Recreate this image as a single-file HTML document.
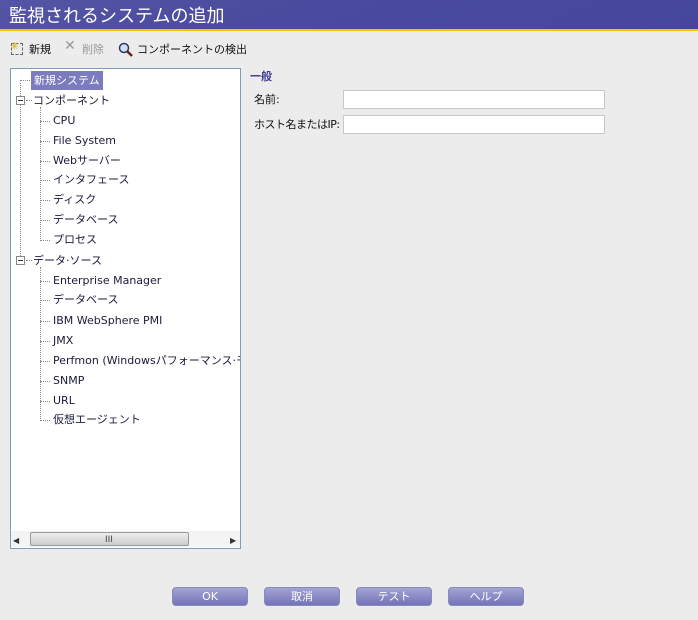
<!DOCTYPE html>
<html><head><meta charset="utf-8"><style>
*{margin:0;padding:0;box-sizing:border-box}
body{width:698px;height:620px;background:#ececec;position:relative;overflow:hidden;font-family:"DejaVu Sans","Noto Sans CJK JP",sans-serif;font-size:11px;color:#111;line-height:13px}
.t{position:absolute;white-space:nowrap}
#title{position:absolute;left:0;top:0;width:698px;height:31px;background:linear-gradient(160deg,#5455a4 0%,#4a4b9e 40%,#46479b 100%);border-bottom:2px solid #f5c400}
#title span{position:absolute;left:9px;top:3px;color:#fff;font-size:18px;line-height:24px;font-family:"Noto Sans CJK JP",sans-serif}
#tree{position:absolute;left:10px;top:68px;width:231px;height:481px;background:#fff;border:1px solid #7f9db9;overflow:hidden}
.r{position:absolute;white-space:nowrap;color:#1a1a3a;font-size:11px;line-height:13px;height:13px}
.hd{position:absolute;border-top:1px dotted #888;width:10px}
.vd{position:absolute;border-left:1px dotted #888}
.box{position:absolute;width:9px;height:9px;border:1px solid #888;background:#fff}
.box:after{content:"";position:absolute;left:1px;top:3px;width:5px;height:1px;background:#333}
.in{position:absolute;left:343px;width:262px;height:19px;background:#fff;border:1px solid #c8c8c8}
.btn{position:absolute;top:587px;width:76px;height:19px;border:1px solid #8a8ab8;border-radius:4px;background:linear-gradient(#a3a3d4,#7373b8);color:#fff;text-align:center;font-size:11px;line-height:17px}
</style></head><body>
<div id="title"><span>監視されるシステムの追加</span></div>
<div class="t" style="left:11px;top:43px;width:12px;height:12px;border:1px dashed #666"></div>
<div class="t" style="left:10px;top:40px;color:#e0b000;font-size:11px">✳</div>
<div class="t" style="left:29px;top:43px">新規</div>
<div class="t" style="left:64px;top:40px;color:#999;font-size:14px">✕</div>
<div class="t" style="left:82px;top:43px;color:#999">削除</div>
<svg class="t" style="left:118px;top:42px" width="16" height="16"><circle cx="6" cy="6" r="4.5" fill="#cfe3f5" stroke="#336" stroke-width="1.5"/><line x1="9" y1="9" x2="14" y2="14" stroke="#622" stroke-width="2.5"/></svg>
<div class="t" style="left:137px;top:43px">コンポーネントの検出</div>

<div id="tree">
<div class="vd" style="left:9px;top:14px;height:177px"></div>
<div class="hd" style="left:9px;top:11px"></div>
<div class="r" style="left:20px;top:2px;background:#7b7bbf;color:#fff;padding:3px 3px;height:19px">新規システム</div>
<div class="box" style="left:5px;top:27px"></div><div class="hd" style="left:15px;top:31px;width:6px"></div>
<div class="r" style="left:22px;top:25px">コンポーネント</div>
<div class="vd" style="left:29px;top:38px;height:134px"></div>
<div class="box" style="left:5px;top:187px"></div><div class="hd" style="left:15px;top:191px;width:6px"></div>
<div class="r" style="left:22px;top:185px">データ·ソース</div>
<div class="vd" style="left:29px;top:198px;height:154px"></div>
</div>

<div class="t" style="left:10px;top:68px;width:231px;height:481px;pointer-events:none">
<div style="position:absolute;left:1px;top:463px;width:229px;height:16px;background:#f4f4f4"></div>
<div style="position:absolute;left:20px;top:464px;width:159px;height:14px;border:1px solid #999;border-radius:2px;background:linear-gradient(#eee,#ccc)"></div>
<div style="position:absolute;left:95px;top:466px;font-size:9px;color:#444">III</div>
<div style="position:absolute;left:3px;top:466px;font-size:8px;color:#333">◀</div>
<div style="position:absolute;left:220px;top:466px;font-size:8px;color:#333">▶</div>
</div>

<div class="t" style="left:0;top:0">
<div class="hd" style="left:40px;top:121px"></div><div class="r" style="left:53px;top:114px">CPU</div>
<div class="hd" style="left:40px;top:141px"></div><div class="r" style="left:53px;top:134px">File System</div>
<div class="hd" style="left:40px;top:161px"></div><div class="r" style="left:53px;top:154px">Webサーバー</div>
<div class="hd" style="left:40px;top:180px"></div><div class="r" style="left:53px;top:173px">インタフェース</div>
<div class="hd" style="left:40px;top:200px"></div><div class="r" style="left:53px;top:193px">ディスク</div>
<div class="hd" style="left:40px;top:220px"></div><div class="r" style="left:53px;top:213px">データベース</div>
<div class="hd" style="left:40px;top:240px"></div><div class="r" style="left:53px;top:233px">プロセス</div>
<div class="hd" style="left:40px;top:281px"></div><div class="r" style="left:53px;top:274px">Enterprise Manager</div>
<div class="hd" style="left:40px;top:300px"></div><div class="r" style="left:53px;top:293px">データベース</div>
<div class="hd" style="left:40px;top:321px"></div><div class="r" style="left:53px;top:314px">IBM WebSphere PMI</div>
<div class="hd" style="left:40px;top:341px"></div><div class="r" style="left:53px;top:334px">JMX</div>
<div class="hd" style="left:40px;top:361px"></div><div class="r" style="left:53px;top:354px;width:187px;overflow:hidden">Perfmon (Windowsパフォーマンス·モニタ)</div>
<div class="hd" style="left:40px;top:381px"></div><div class="r" style="left:53px;top:374px">SNMP</div>
<div class="hd" style="left:40px;top:401px"></div><div class="r" style="left:53px;top:394px">URL</div>
<div class="hd" style="left:40px;top:420px"></div><div class="r" style="left:53px;top:413px">仮想エージェント</div>
</div>

<div class="t" style="left:250px;top:70px;color:#3b3b8f;font-weight:bold">一般</div>
<div class="t" style="left:254px;top:93px">名前:</div>
<div class="in" style="top:90px"></div>
<div class="t" style="left:254px;top:118px;letter-spacing:-0.5px">ホスト名またはIP:</div>
<div class="in" style="top:115px"></div>

<div class="btn" style="left:172px">OK</div>
<div class="btn" style="left:264px">取消</div>
<div class="btn" style="left:356px">テスト</div>
<div class="btn" style="left:448px">ヘルプ</div>
</body></html>
